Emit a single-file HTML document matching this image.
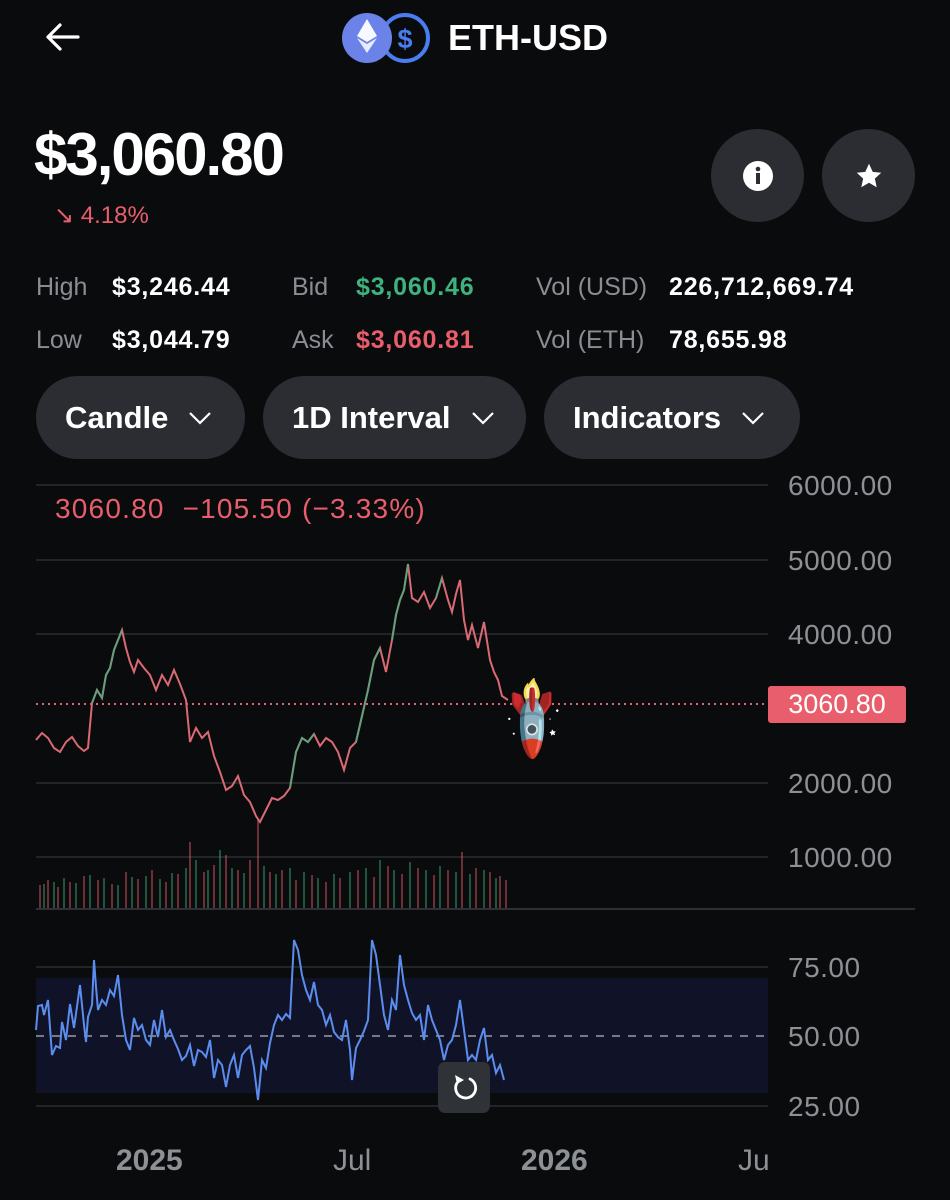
<!DOCTYPE html>
<html><head><meta charset="utf-8"><style>
*{margin:0;padding:0;box-sizing:border-box}
body{width:950px;height:1200px;background:#0a0b0d;font-family:"Liberation Sans",sans-serif;color:#fff;position:relative;overflow:hidden}
.a{position:absolute;white-space:nowrap}
.lbl{color:#8a8d93;font-size:25px}
.val{font-size:25px;font-weight:bold;letter-spacing:.8px}
.btn{position:absolute;top:376px;height:83px;border-radius:42px;background:#2b2d32;font-size:31px;font-weight:bold;display:flex;align-items:center;padding-left:29px}
.btn svg{margin-left:20px}
.round{position:absolute;top:129px;width:93px;height:93px;border-radius:50%;background:#2b2d32;display:flex;align-items:center;justify-content:center}
</style></head><body>
<svg class="a" style="left:44px;top:22px" width="36" height="30" viewBox="0 0 36 30"><path d="M34 15H4M16 3L4 15l12 12" stroke="#fff" stroke-width="3.2" fill="none" stroke-linecap="round" stroke-linejoin="round"/></svg>
<svg class="a" style="left:340px;top:10px" width="94" height="56" viewBox="0 0 94 56">
<circle cx="65" cy="28" r="23" fill="#0a0b0d" stroke="#4a7df0" stroke-width="4"/>
<text x="65" y="38" fill="#4a7df0" font-size="27" font-weight="bold" text-anchor="middle" font-family="Liberation Sans">$</text>
<circle cx="27" cy="28" r="25" fill="#6b83e8"/>
<path d="M27 9l-10 17 10 6 10-6z" fill="#fff" opacity=".95"/><path d="M27 34l-10-6 10 15 10-15z" fill="#e6ebff"/>
</svg>
<div class="a" style="left:448px;top:17px;font-size:36px;font-weight:bold">ETH-USD</div>
<div class="a" style="left:34px;top:120px;font-size:60px;font-weight:bold;letter-spacing:-2px">$3,060.80</div>
<div class="a" style="left:54px;top:201px;font-size:24px;color:#e95e6c">↘ 4.18%</div>
<div class="round" style="left:711px"><svg width="32" height="32" viewBox="0 0 32 32"><circle cx="16" cy="16" r="15" fill="#fff"/><rect x="14" y="13" width="4" height="11" fill="#2b2d32"/><circle cx="16" cy="9" r="2.3" fill="#2b2d32"/></svg></div>
<div class="round" style="left:822px"><svg width="28" height="28" viewBox="0 0 24 24"><path d="M12 1.5l3.2 7 7.3.7-5.5 5 1.6 7.4L12 17.8l-6.6 3.8L7 14.2l-5.5-5 7.3-.7z" fill="#fff"/></svg></div>

<div class="a lbl" style="left:36px;top:273px">High</div><div class="a val" style="left:112px;top:273px">$3,246.44</div>
<div class="a lbl" style="left:36px;top:326px">Low</div><div class="a val" style="left:112px;top:326px">$3,044.79</div>
<div class="a lbl" style="left:292px;top:273px">Bid</div><div class="a val" style="left:356px;top:273px;color:#3fb27f">$3,060.46</div>
<div class="a lbl" style="left:292px;top:326px">Ask</div><div class="a val" style="left:356px;top:326px;color:#e95e6c">$3,060.81</div>
<div class="a lbl" style="left:536px;top:273px">Vol (USD)</div><div class="a val" style="left:669px;top:273px">226,712,669.74</div>
<div class="a lbl" style="left:536px;top:326px">Vol (ETH)</div><div class="a val" style="left:669px;top:326px">78,655.98</div>

<div class="btn" style="left:36px;width:209px">Candle<svg width="24" height="14" viewBox="0 0 24 14"><path d="M2 2l10 10L22 2" stroke="#fff" stroke-width="2.2" fill="none"/></svg></div>
<div class="btn" style="left:263px;width:263px">1D Interval<svg width="24" height="14" viewBox="0 0 24 14"><path d="M2 2l10 10L22 2" stroke="#fff" stroke-width="2.2" fill="none"/></svg></div>
<div class="btn" style="left:544px;width:256px">Indicators<svg width="24" height="14" viewBox="0 0 24 14"><path d="M2 2l10 10L22 2" stroke="#fff" stroke-width="2.2" fill="none"/></svg></div>

<svg class="a" style="left:0;top:470px" width="950" height="730" viewBox="0 470 950 730">
<g stroke="#2a2c30" stroke-width="1.5">
<line x1="36" y1="485" x2="768" y2="485"/><line x1="36" y1="560" x2="768" y2="560"/><line x1="36" y1="634" x2="768" y2="634"/>
<line x1="36" y1="783" x2="768" y2="783"/><line x1="36" y1="857" x2="768" y2="857"/>
<line x1="36" y1="967" x2="768" y2="967"/><line x1="36" y1="1106" x2="768" y2="1106"/>
</g>
<line x1="36" y1="909" x2="915" y2="909" stroke="#3a3c40" stroke-width="1.5"/>
<g stroke-width="1.6" opacity=".55">
<path stroke="#e95e6c" d="M40 908V885M48 908V880M58 908V887M70 908V882M84 908V876M98 908V880M112 908V884M126 908V872M138 908V879M152 908V870M166 908V882M178 908V874M190 908V842M204 908V872M214 908V865M226 908V855M238 908V870M250 908V860M258 908V820M270 908V872M282 908V870M296 908V880M312 908V875M326 908V882M340 908V878M358 908V870M374 908V877M388 908V866M402 908V874M418 908V868M434 908V875M448 908V870M462 908V852M476 908V868M490 908V872M500 908V876M506 908V880"/>
<path stroke="#3fb27f" d="M44 908V884M54 908V882M64 908V878M76 908V883M90 908V875M104 908V878M118 908V885M132 908V877M146 908V876M160 908V879M172 908V873M186 908V868M196 908V860M208 908V870M220 908V850M232 908V868M244 908V873M264 908V866M276 908V874M290 908V868M304 908V872M318 908V878M334 908V874M350 908V872M366 908V868M380 908V860M394 908V870M410 908V862M426 908V870M440 908V866M456 908V872M470 908V874M484 908V870M496 908V878"/>
</g>
<polyline fill="none" stroke="#d96a74" stroke-width="2" points="36,740 42,733 48,738 54,748 60,752 66,742 72,737 78,746 84,751 88,748 92,703 97,690 102,698 106,675 110,668 114,650 118,640 122,630 126,648 130,662 134,672 138,660 144,668 150,675 156,690 162,675 168,685 174,670 180,684 186,700 190,742 196,728 202,738 208,732 214,756 220,772 226,790 232,786 238,776 244,795 250,802 256,816 260,822 266,810 272,798 278,800 284,796 290,788 296,752 302,738 308,742 314,734 320,746 326,738 332,742 338,752 344,770 350,748 356,742 362,716 368,690 374,660 380,648 386,672 392,640 396,615 400,600 404,590 408,564 412,598 418,602 424,592 430,608 436,598 442,578 448,600 452,612 456,594 460,580 464,620 468,640 472,625 478,648 484,622 490,660 494,672 498,680 502,696 508,700"/>
<g fill="none" stroke="#3fb27f" stroke-width="2" opacity=".75">
<polyline points="92,703 97,690 102,698 106,675 110,668 114,650 118,640 122,630"/>
<polyline points="290,788 296,752 302,738 308,742 314,734"/>
<polyline points="356,742 362,716 368,690 374,660 380,648"/>
<polyline points="392,640 396,615 400,600 404,590 408,564"/>
<polyline points="436,598 442,578"/>
</g>
<line x1="36" y1="704" x2="768" y2="704" stroke="#e95e6c" stroke-width="2" stroke-dasharray="2 4"/>
<rect x="768" y="686" width="138" height="37" rx="3" fill="#e95e6c"/>
<text x="837" y="713" fill="#fff" font-size="27" text-anchor="middle" font-family="Liberation Sans">3060.80</text>
<text x="508" y="738" font-size="56" font-family="Noto Color Emoji,sans-serif" transform="rotate(135 538 716)">🚀</text>
<g fill="#8d9095" font-size="28" font-family="Liberation Sans" letter-spacing=".5">
<text x="788" y="495">6000.00</text><text x="788" y="570">5000.00</text><text x="788" y="644">4000.00</text>
<text x="788" y="793">2000.00</text><text x="788" y="867">1000.00</text>
<text x="788" y="977">75.00</text><text x="788" y="1046">50.00</text><text x="788" y="1116">25.00</text>
</g>
<text x="55" y="518" fill="#e95e6c" font-size="28" letter-spacing="1.2" font-family="Liberation Sans" style="white-space:pre">3060.80  −105.50 (−3.33%)</text>
<rect x="36" y="978" width="732" height="115" fill="#11142a" opacity=".9"/>
<line x1="36" y1="1036" x2="768" y2="1036" stroke="#9a9da3" stroke-width="1.5" stroke-dasharray="8 8"/>
<polyline fill="none" stroke="#5b8def" stroke-width="2" points="36,1030 38,1006 42,1005 44,1015 48,1000 52,1055 56,1046 60,1048 62,1022 66,1040 70,1004 74,1028 80,985 84,1025 86,1042 88,1017 92,1005 94,960 96,987 98,1010 102,1000 106,1005 110,990 114,996 118,975 122,1015 126,1040 130,1050 134,1018 138,1030 142,1025 146,1040 150,1045 154,1020 158,1037 162,1010 166,1037 170,1030 174,1040 178,1049 182,1060 186,1056 190,1045 194,1066 198,1050 202,1052 206,1057 210,1040 214,1078 218,1060 222,1065 226,1087 230,1065 234,1055 238,1078 242,1055 246,1050 250,1046 254,1068 258,1100 262,1060 266,1068 270,1043 274,1025 278,1015 282,1020 286,1014 290,1018 294,940 298,950 302,975 306,990 310,1000 314,982 318,1005 322,1010 326,1025 330,1015 334,1032 338,1037 342,1040 346,1020 350,1050 352,1080 356,1048 360,1040 364,1031 368,1020 372,940 376,955 380,985 384,1015 388,1030 392,1000 396,1010 400,955 404,985 408,1000 412,1013 416,1020 420,1015 424,1040 428,1005 432,1020 436,1030 440,1040 444,1060 448,1045 452,1040 456,1025 460,1000 464,1030 468,1060 472,1055 476,1060 480,1040 484,1028 488,1060 492,1055 496,1073 500,1065 504,1080"/>
<rect x="438" y="1062" width="52" height="51" rx="7" fill="#2f3237"/>
<path d="M470 1079a10 10 0 1 1-13 4" stroke="#fff" stroke-width="2.8" fill="none" stroke-linecap="round"/>
<path d="M455 1075l2 9 7-4z" fill="#fff"/>
<g fill="#8d9095" font-size="30" font-family="Liberation Sans">
<text x="116" y="1170" font-weight="bold">2025</text><text x="333" y="1170">Jul</text>
<text x="521" y="1170" font-weight="bold">2026</text><text x="738" y="1170">Ju</text>
</g>
</svg>
</body></html>
